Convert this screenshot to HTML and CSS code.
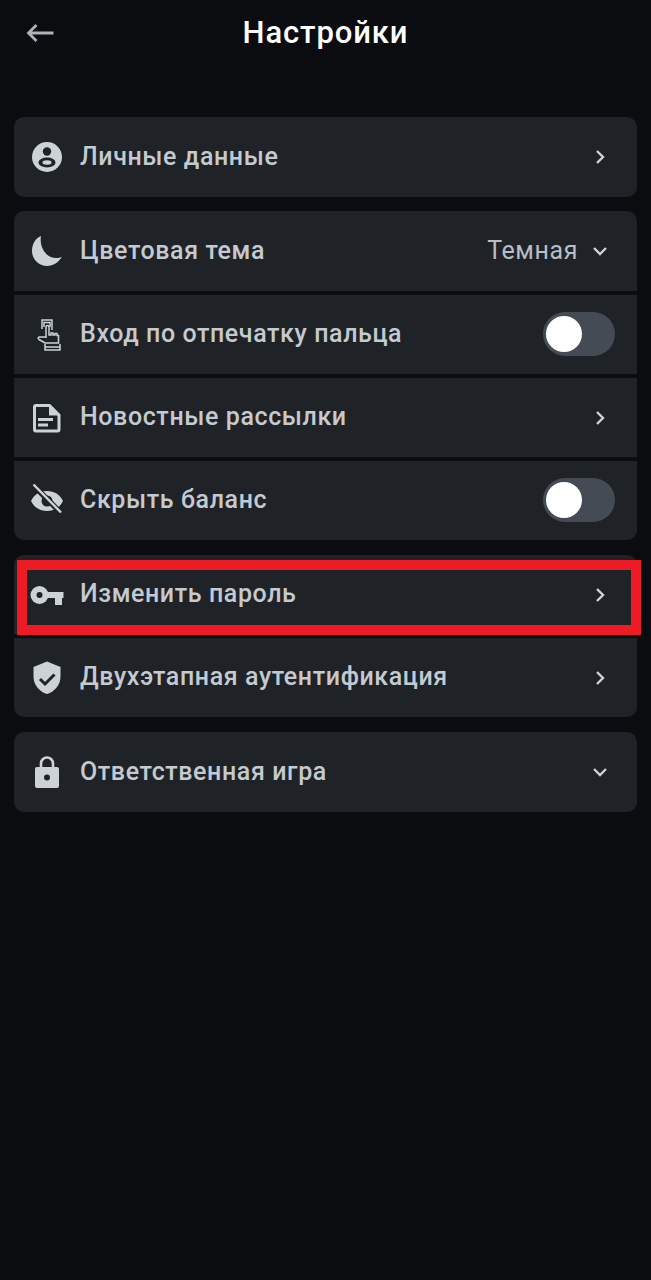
FILE: index.html
```html
<!DOCTYPE html>
<html lang="ru">
<head>
    <meta charset="UTF-8">
    <meta name="viewport" content="width=device-width, initial-scale=1.0">
    <title>Настройки</title>
    <link rel="stylesheet" href="styles.css">
</head>
<body>
    <header class="top-bar">
        <svg class="back-icon" viewBox="0 0 28 20" width="28" height="20"><path d="M27.500 10H2.500M10.500 2l-8 8 8 8" fill="none" stroke="#adb2b7" stroke-width="2.800"/></svg>
        <h1 class="title">Настройки</h1>
    </header>

    <main class="settings">
        <section class="group">
            <div class="row">
                <svg class="icon" viewBox="0 0 34 34"><circle cx="17" cy="17" r="15" fill="#cdd2d7"/><circle cx="17" cy="11.500" r="4.200" fill="#1f2328"/><ellipse cx="17" cy="22.500" rx="8.500" ry="5" fill="#1f2328"/><ellipse cx="17" cy="22.500" rx="4.500" ry="2.200" fill="#cdd2d7"/></svg>
                <span class="label">Личные данные</span>
                <svg class="arrow" viewBox="0 0 16 16"><path d="M5 2l6 6-6 6" /></svg>
            </div>
        </section>

        <section class="group">
            <div class="row">
                <svg class="icon" viewBox="0 0 34 34"><path d="M11 2C5.500 4 2 10 2 17c0 8.500 6.800 15 15 15 6.200 0 11.500-3.500 15-9.500-1.500 1-3.500 1.500-6 1.500C16 24 9 13 11 2z" fill="#cdd2d7"/></svg>
                <span class="label">Цветовая тема</span>
                <span class="value">Темная</span>
                <svg class="arrow" viewBox="0 0 16 16"><path d="M2 5l6 6 6-6" /></svg>
            </div>
            <div class="row">
                <svg class="icon" viewBox="0 0 34 34" fill="none" stroke="#cdd2d7" stroke-width="1.500"><path d="M12 11V2h10v10M14 9V4.500h6V9"/><path d="M16 20v-11a1.500 1.500 0 0 1 3 0v8l2 0v-2h2v2h2v-1.500h2v2h1.500v7.500H15l-6-3.500c-1.500-1-1-2.500 1-2.500h6"/><path d="M15 26v6h15v-6M15 29h15"/></svg>
                <span class="label">Вход по отпечатку пальца</span>
                <span class="toggle"><span class="knob"></span></span>
            </div>
            <div class="row">
                <svg class="icon" viewBox="0 0 34 34"><path d="M4.500 6a1.500 1.500 0 0 1 1.500-1.500h13.500l9.500 9.500v14.500a1.500 1.500 0 0 1-1.500 1.500H6a1.500 1.500 0 0 1-1.500-1.500z" fill="none" stroke="#cdd2d7" stroke-width="3"/><path d="M19 4v10.500h10.500v-1L20 4z" fill="#cdd2d7"/><path d="M8 17h15v3H8zM8 22.500h10v3H8z" fill="#cdd2d7"/></svg>
                <span class="label">Новостные рассылки</span>
                <svg class="arrow" viewBox="0 0 16 16"><path d="M5 2l6 6-6 6" /></svg>
            </div>
            <div class="row">
                <svg class="icon" viewBox="0 0 34 34"><path d="M1 17C4 10.500 10 7 17 7s13 3.500 16 10c-3 6.500-9 10-16 10S4 23.500 1 17z" fill="#cdd2d7"/><circle cx="17" cy="17" r="5.500" fill="#1f2328"/><path d="M3 1l28 28" stroke="#1f2328" stroke-width="5.500"/><path d="M3.500 0.500l27.500 28" stroke="#cdd2d7" stroke-width="2.400"/></svg>
                <span class="label">Скрыть баланс</span>
                <span class="toggle"><span class="knob"></span></span>
            </div>
        </section>

        <section class="group">
            <div class="row">
                <svg class="icon" viewBox="0 0 34 34"><circle cx="9.500" cy="17" r="9" fill="#cdd2d7"/><path d="M15 14h18.500v6H32v7h-7v-7H15z" fill="#cdd2d7"/><circle cx="9.500" cy="17" r="3" fill="#1f2328"/></svg>
                <span class="label">Изменить пароль</span>
                <svg class="arrow" viewBox="0 0 16 16"><path d="M5 2l6 6-6 6" /></svg>
                <div class="highlight"></div>
            </div>
            <div class="row">
                <svg class="icon" viewBox="0 0 34 34"><path d="M17 0.500L3.500 6v9.500c0 8.500 5.700 15 13.500 17.500 7.800-2.500 13.500-9 13.500-17.500V6z" fill="#cdd2d7"/><path d="M10 18l5 5 9.500-9.500" fill="none" stroke="#1f2328" stroke-width="3"/></svg>
                <span class="label">Двухэтапная аутентификация</span>
                <svg class="arrow" viewBox="0 0 16 16"><path d="M5 2l6 6-6 6" /></svg>
            </div>
        </section>

        <section class="group">
            <div class="row">
                <svg class="icon" viewBox="0 0 34 34"><path d="M11 13V8.500a6 6 0 0 1 12 0V13" fill="none" stroke="#cdd2d7" stroke-width="2.600"/><rect x="5" y="12" width="24" height="21" rx="2" fill="#cdd2d7"/><circle cx="17" cy="22.500" r="3" fill="#1f2328"/></svg>
                <span class="label">Ответственная игра</span>
                <svg class="arrow" viewBox="0 0 16 16"><path d="M2 5l6 6 6-6" /></svg>
            </div>
        </section>
    </main>
</body>
</html>
```

FILE: styles.css
```css
* {
    box-sizing: border-box;
}
body {
    margin: 0;
    min-height: 1280px;
    background-color: #0a0c0f;
    font-family: Roboto, "Noto Sans", sans-serif;
    color: #c5cad0;
}
.top-bar {
    position: relative;
    height: 117px;
    padding-top: 13px;
}
.back-icon {
    position: absolute;
    left: 26px;
    top: 23px;
}
.title {
    margin: 0;
    font-size: 31px;
    line-height: 40px;
    font-weight: 500;
    letter-spacing: 0.9px;
    text-align: center;
    color: #fff;
}
.settings {
    display: flex;
    flex-direction: column;
    padding: 0 14px;
}
.group {
    display: flex;
    flex-direction: column;
    gap: 4px;
    margin-bottom: 15px;
}
.group:first-child {
    margin-bottom: 14px;
}
.row {
    position: relative;
    display: flex;
    align-items: center;
    height: 79px;
    padding: 0 23px 2px 16px;
    background-color: #1f2328;
}
.group .row:first-child {
    height: 80px;
    border-top-left-radius: 10px;
    border-top-right-radius: 10px;
}
.group:nth-child(3) .row:first-child {
    height: 79px;
}
.group .row:last-child {
    border-bottom-left-radius: 10px;
    border-bottom-right-radius: 10px;
}
.icon {
    width: 34px;
    height: 34px;
    margin-top: 2px;
    margin-right: 16px;
    flex-shrink: 0;
}
.label {
    flex: 1;
    font-size: 25px;
    font-weight: 500;
    letter-spacing: 0.6px;
}
.value {
    font-size: 25px;
    letter-spacing: 0.6px;
    margin-right: 14px;
    color: #b9bec4;
}
.arrow {
    width: 16px;
    height: 16px;
    margin-top: 2px;
    margin-right: 6px;
    fill: none;
    stroke: #cdd2d7;
    stroke-width: 2.4;
}
.toggle {
    display: flex;
    align-items: center;
    width: 72px;
    height: 44px;
    padding-left: 3px;
    border-radius: 22px;
    background-color: #444b55;
    margin-right: -1px;
}
.knob {
    width: 36px;
    height: 36px;
    border-radius: 50%;
    background-color: #fff;
}
.highlight {
    position: absolute;
    left: 3px;
    top: 5px;
    width: 624px;
    height: 75px;
    border: 10px solid #ed1c24;
}
```
